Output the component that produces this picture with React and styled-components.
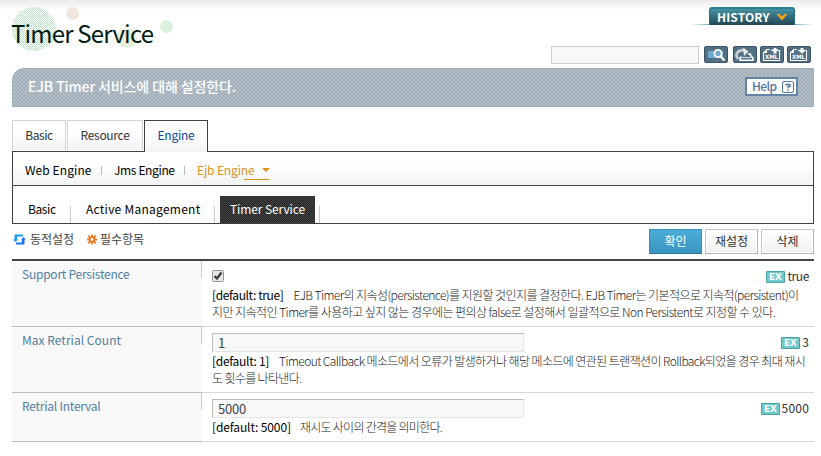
import React from "react";
import styled, { createGlobalStyle, css } from "styled-components";

const GlobalStyle = createGlobalStyle`
  * { box-sizing: border-box; }
  body {
    margin: 0;
    background: #fff;
    color: #444;
    font: 12px/17px "Noto Sans CJK KR", "Noto Sans", sans-serif;
  }
  button, input { font: inherit; color: inherit; margin: 0; }
  svg { flex: none; }
`;

const Text = styled.span`
  letter-spacing: ${(p) => p.$ls || 0}px;
  white-space: nowrap;
`;

const Page = styled.div`
  width: 821px;
  height: 456px;
  overflow: hidden;
  padding: 0 7px 0 12px;
  background: linear-gradient(#ebebeb, #fff 10px) no-repeat;
`;

const Header = styled.header`
  display: flex;
  justify-content: space-between;
  height: 68px;
`;

const TitleArea = styled.div`
  position: relative;
  width: 180px;
`;

const Bubbles = styled.svg`
  position: absolute;
  left: 0;
  top: 0;
`;

const Title = styled.h1`
  position: relative;
  margin: 17px 0 0 -1px;
  font-size: 24px;
  line-height: 32px;
  font-weight: 400;
  color: #001a12;
  letter-spacing: -0.82px;
  white-space: nowrap;
`;

const HeaderTools = styled.div`
  display: flex;
  flex-direction: column;
  align-items: flex-end;
  width: 265px;
`;

const HistoryRail = styled.div`
  display: flex;
  justify-content: center;
  width: 124px;
  height: 25px;
  padding-top: 7px;
  background: linear-gradient(90deg, #fff, #5ba3b0 18%, #5ba3b0 82%, #fff) 0 24px / 100% 1px no-repeat;
`;

const HistoryButton = styled.button`
  display: flex;
  align-items: center;
  gap: 6px;
  width: 86px;
  height: 18px;
  padding: 0 6px 1px 7px;
  border: 1px solid #2b7080;
  border-top: 2px solid #2b8090;
  border-bottom: 0;
  border-radius: 3px 3px 0 0;
  background: linear-gradient(#4592a3, #234753);
  color: #fff;
  font-weight: 700;
  line-height: 14px;
`;

const Toolbar = styled.div`
  display: flex;
  margin: 21px 3px 0 0;
`;

const SearchInput = styled.input`
  width: 148px;
  height: 18px;
  margin-right: 5px;
  border: 1px solid #ccc;
  background: #f8f8f8;
`;

const IconButton = styled.button`
  display: block;
  width: 24px;
  height: 17px;
  margin-left: ${(p) => p.$gap || 0}px;
  padding: 0;
  border: 1px solid #3c5266;
  border-radius: 2px;
  background: #526f84;
  svg { display: block; }
`;

const IconLabel = styled.text`
  font: 700 ${(p) => p.$size}px "DejaVu Sans", sans-serif;
  fill: #fff;
`;

const Banner = styled.div`
  display: flex;
  align-items: center;
  justify-content: space-between;
  height: 39px;
  padding: 0 15px 2px;
  border: 1px solid #9cadba;
  border-radius: 12px 0 0 0;
  background: repeating-conic-gradient(#b2bdc6 0 25%, #a1afbb 0 50%) 0 0 / 4px 4px;
  color: #fff;
  font-size: 14px;
  font-weight: 500;
`;

const HelpButton = styled.button`
  display: flex;
  align-items: center;
  justify-content: space-between;
  width: 53px;
  height: 19px;
  padding: 0 2px 0 5px;
  border: 2px solid #6384a3;
  background: #fff;
  color: #56799a;
  font-size: 12px;
  line-height: 15px;
  ${Text} { margin-top: -2px; }
`;

const Tabs = styled.nav`
  display: flex;
  gap: 1px;
  height: 31px;
  margin-top: 13px;
`;

const Tab = styled.a`
  display: flex;
  justify-content: center;
  width: ${(p) => p.$w}px;
  height: 30px;
  padding-top: 5px;
  border: 1px solid #d3d3d3;
  border-bottom: 0;
  background: linear-gradient(#fff 40%, #f2f3f5);
  color: #333;
  ${(p) => p.$active && css`
    z-index: 1;
    height: 32px;
    border-color: #414141;
    color: #0a4a9a;
  `}
`;

const Panel = styled.div`
  border: 1px solid #414141;
  height: 73px;
`;

const EngineRow = styled.div`
  display: flex;
  height: 34px;
  padding: 9px 0 0 12px;
  border-bottom: 1px solid #414141;
  background: linear-gradient(#fff 35%, #f2f3f5);
`;

const EngineLink = styled.a`
  position: relative;
  width: ${(p) => p.$w}px;
  color: ${(p) => (p.$active ? "#dd921a" : "#000")};
  &:not(:last-child)::after {
    content: "";
    position: absolute;
    right: ${(p) => p.$sep}px;
    top: 5px;
    height: 9px;
    border-left: 1px solid #bbb;
  }
`;

const EngineMarker = styled.svg`
  position: absolute;
  left: 47px;
  top: 6px;
`;

const ServiceRow = styled.div`
  display: flex;
  align-items: flex-end;
  height: 37px;
`;

const ServiceTab = styled.a`
  height: 27px;
  width: ${(p) => p.$w}px;
  padding: 4px 0 0 ${(p) => p.$pad}px;
  color: #000;
  ${(p) => p.$active && css`
    background: repeating-conic-gradient(#242424 0 25%, #464646 0 50%) 0 0 / 2px 2px;
    color: #fff;
  `}
`;

const Divider = styled.i`
  width: 1px;
  height: 17px;
  margin-right: ${(p) => p.$after || 0}px;
  margin-left: ${(p) => p.$before || 0}px;
  background: #ccc;
`;

const ActionBar = styled.div`
  display: flex;
  justify-content: space-between;
  height: 35px;
  padding-top: 5px;
`;

const Legend = styled.div`
  display: flex;
  height: 20px;
  padding-top: 1px;
`;

const LegendItem = styled.span`
  display: flex;
  gap: ${(p) => p.$gap}px;
  margin: 0 12px 0 1px;
  svg { margin-top: 4px; }
`;

const Actions = styled.div`
  display: flex;
  gap: 3px;
`;

const ActionButton = styled.button`
  width: 53px;
  height: 25px;
  padding: 0 0 2px;
  border: 1px solid #c4c4c4;
  border-right-color: #b4b4b4;
  border-bottom-color: #b4b4b4;
  box-shadow: inset 0 0 0 1px #fff;
  background: linear-gradient(#fff, #f0f0f0);
  color: #333;
  ${(p) => p.$primary && css`
    border-color: #3c90b8;
    border-bottom-color: #2b7399;
    box-shadow: none;
    background: linear-gradient(#4badd9, #3b94c0);
    color: #fff;
  `}
`;

const Settings = styled.div`
  border-top: 2px solid #444;
`;

const Setting = styled.div`
  display: grid;
  grid-template-columns: 190px 1fr;
  height: ${(p) => p.$h}px;
`;

const SettingLabel = styled.div`
  padding: 4px 0 0 10px;
  border-bottom: 1px solid #bbb;
  background: linear-gradient(#ccc, #ccc) 189px 0 / 1px 17px no-repeat #f9f9f9;
  color: #50809f;
`;

const SettingBody = styled.div`
  padding: 6px 5px 0 10px;
  border-bottom: 1px solid #d9d9d9;
`;

const ControlRow = styled.div`
  display: flex;
  justify-content: space-between;
  height: 20px;
`;

const ValueInput = styled.input`
  width: 312px;
  height: 19px;
  padding: 0 5px;
  border: 1px solid #e5e5e5;
  border-top-color: #bbb;
  border-left-color: #bbb;
  background: #f8f8f8;
  font-size: 13px;
  letter-spacing: -0.2px;
`;

const Checkbox = styled.svg`
  margin-top: 3px;
`;

const Example = styled.div`
  display: flex;
  gap: 2px;
  color: #333;
  svg { margin-top: 4px; }
`;

const Description = styled.div`
  height: ${(p) => (p.$lines || 1) * 17}px;
  line-height: 16.5px;
  font-weight: 300;
  color: #1c1c1c;
`;

const Default = styled(Text)`
  display: inline-block;
  margin-right: ${(p) => p.$gap}px;
  color: #000;
  font-weight: 400;
`;

const ExBadge = () => (
  <svg width="19" height="12" viewBox="0 0 19 12">
    <rect width="19" height="12" rx="1" fill="#4aa3a5" />
    <rect x="1" y="1" width="17" height="10" fill="#71c9ca" />
    <IconLabel $size={8} x="3" y="9" textLength="13" lengthAdjust="spacingAndGlyphs">EX</IconLabel>
  </svg>
);

const SearchIcon = () => (
  <svg width="22" height="15" viewBox="0 0 22 15">
    <path d="M3 4h15v7H3z" fill="#6fa9cf" />
    <circle cx="13" cy="6.500" r="3.600" fill="#6fa9cf" stroke="#fff" strokeWidth="1.800" />
    <path d="M15.800 9.500l3.700 4" stroke="#fff" strokeWidth="2.200" />
  </svg>
);

const UndoIcon = () => (
  <svg width="22" height="15" viewBox="0 0 22 15" fill="none">
    <path d="M4 12C0.500 7 4 2.500 10 3.500" stroke="#c3cad0" strokeWidth="3" />
    <path d="M9 0.500l5.500 4L10 9z" fill="#e8ebed" />
    <path d="M7.500 9.500L6 11v2.300h13V11l-2.500-2.500V7H14" stroke="#fff" strokeWidth="1.500" />
    <path d="M8 10.500h9" stroke="#fff" strokeWidth="0.800" />
  </svg>
);

const XmlIcon = ({ down }) => (
  <svg width="22" height="15" viewBox="0 0 22 15" fill="none">
    <path d="M9 2.500H6L2.500 6v7.500h16V2.500" stroke="#fff" shapeRendering="crispEdges" />
    <path d="M3 6h3V3z" fill="#fff" />
    <path d={down ? "M12.500 1h3v2H18.500L14 6.500 9.500 3h3z" : "M14 0.500L18.500 4h-3v2.500h-3V4h-3z"} fill="#fff" />
    <IconLabel $size={6} x="4" y="12" textLength="13" lengthAdjust="spacingAndGlyphs">XML</IconLabel>
  </svg>
);

const DynamicIcon = () => (
  <svg width="13" height="11" viewBox="0 0 13 11">
    <path d="M2 1h8v2H4v3H5L2.500 8.500 0 6h1.500V2z" fill="#1499f5" transform="translate(0 -0.500)" />
    <path d="M11 10H3V8h6V5H8l2.500-2.500L13 5h-1.500v4z" fill="#1a70f2" transform="translate(0 0.500)" />
  </svg>
);

const RequiredIcon = () => (
  <svg width="10" height="11" viewBox="0 0 10 11" stroke="#f07a20" fill="none">
    <path d="M5 0.500v3M5 7.500v3M0 5.500h3M7 5.500h3M1.200 1.700l2.300 2.300M8.800 1.700L6.500 4M1.200 9.300L3.500 7M8.800 9.300L6.500 7" strokeWidth="1.800" />
    <circle cx="5" cy="5.500" r="2.300" strokeWidth="1.800" />
  </svg>
);

const rows = [
  {
    label: "Support Persistence", ls: -0.24, h: 66, control: "check",
    example: "true", exLs: -0.4, def: "[default: true]", defLs: -0.38, gap: 10,
    lines: [
      ["EJB Timer의 지속성(persistence)를 지원할 것인지를 결정한다. EJB Timer는 기본적으로 지속적(persistent)이", -0.57],
      ["지만 지속적인 Timer를 사용하고 싶지 않는 경우에는 편의상 false로 설정해서 일괄적으로 Non Persistent로 지정할 수 있다.", -0.55],
    ],
  },
  {
    label: "Max Retrial Count", ls: 0.03, h: 66, control: "1",
    example: "3", exLs: 0, def: "[default: 1]", defLs: -0.3, gap: 10,
    lines: [
      ["Timeout Callback 메소드에서 오류가 발생하거나 해당 메소드에 연관된 트랜잭션이 Rollback되었을 경우 최대 재시", -0.59],
      ["도 횟수를 나타낸다.", -0.65],
    ],
  },
  {
    label: "Retrial Interval", ls: -0.24, h: 49, control: "5000",
    example: "5000", exLs: 0.2, def: "[default: 5000]", defLs: -0.12, gap: 9,
    lines: [["재시도 사이의 간격을 의미한다.", -0.72]],
  },
];

export default function App() {
  return (
    <Page>
      <GlobalStyle />
      <Header>
        <TitleArea>
          <Bubbles width="180" height="60">
            <defs>
              <pattern id="mesh" width="2" height="2" patternUnits="userSpaceOnUse">
                <path d="M0 0h1v1H0zM1 1h1v1H1z" fill="#bfe6c8" />
              </pattern>
            </defs>
            <circle cx="22" cy="29" r="22" fill="url(#mesh)" />
            <circle cx="60.500" cy="13.500" r="6.500" fill="#f0e6db" />
            <circle cx="154.500" cy="26.500" r="6.500" fill="#dbf0dc" />
            <circle cx="115" cy="38" r="10" fill="#e7efdb" />
          </Bubbles>
          <Title>Timer Service</Title>
        </TitleArea>
        <HeaderTools>
          <HistoryRail>
            <HistoryButton>
              <Text $ls={0.13}>HISTORY</Text>
              <svg width="12" height="8" viewBox="0 0 12 8">
                <path d="M0.500 1h3L6 3.500 8.500 1h3L6 7.500z" fill="#f9a51b" />
              </svg>
            </HistoryButton>
          </HistoryRail>
          <Toolbar>
            <SearchInput />
            <IconButton><SearchIcon /></IconButton>
            <IconButton $gap={5}><UndoIcon /></IconButton>
            <IconButton $gap={3}><XmlIcon /></IconButton>
            <IconButton $gap={3}><XmlIcon down /></IconButton>
          </Toolbar>
        </HeaderTools>
      </Header>

      <Banner>
        <Text $ls={-0.11}>EJB Timer 서비스에 대해 설정한다.</Text>
        <HelpButton>
          <Text $ls={-0.6}>Help</Text>
          <svg width="12" height="12" viewBox="0 0 12 12" fill="none" stroke="#56799a">
            <rect x="0.500" y="0.500" width="11" height="11" rx="1.500" />
            <path d="M4 4.500V3.500h4v2H6v2M6 8.500v1.500" strokeWidth="1.300" />
          </svg>
        </HelpButton>
      </Banner>

      <Tabs>
        <Tab $w={54}><Text $ls={-0.4}>Basic</Text></Tab>
        <Tab $w={76}><Text $ls={-0.29}>Resource</Text></Tab>
        <Tab $w={64} $active><Text $ls={-0.24}>Engine</Text></Tab>
      </Tabs>
      <Panel>
        <EngineRow>
          <EngineLink $w={89} $sep={12}><Text $ls={0.08}>Web Engine</Text></EngineLink>
          <EngineLink $w={83} $sep={12}><Text $ls={-0.36}>Jms Engine</Text></EngineLink>
          <EngineLink $w={80} $active>
            <Text $ls={-0.14}>Ejb Engine</Text>
            <EngineMarker width="26" height="14">
              <path d="M18 1h8l-4 4z" fill="#dd921a" />
              <path d="M0 12.500h25" stroke="#dd921a" />
            </EngineMarker>
          </EngineLink>
        </EngineRow>
        <ServiceRow>
          <ServiceTab $w={57} $pad={15}><Text $ls={-0.4}>Basic</Text></ServiceTab>
          <Divider />
          <ServiceTab $w={143} $pad={15}><Text $ls={0.26}>Active Management</Text></ServiceTab>
          <Divider $after={5} />
          <ServiceTab $w={95} $pad={10} $active><Text $ls={-0.11}>Timer Service</Text></ServiceTab>
          <Divider $before={4} />
        </ServiceRow>
      </Panel>

      <ActionBar>
        <Legend>
          <LegendItem $gap={4}>
            <DynamicIcon />
            <Text $ls={-0.04}>동적설정</Text>
          </LegendItem>
          <LegendItem $gap={3}>
            <RequiredIcon />
            <Text $ls={-0.04}>필수항목</Text>
          </LegendItem>
        </Legend>
        <Actions>
          <ActionButton $primary>확인</ActionButton>
          <ActionButton>재설정</ActionButton>
          <ActionButton>삭제</ActionButton>
        </Actions>
      </ActionBar>

      <Settings>
        {rows.map((r) => (
          <Setting key={r.label} $h={r.h}>
            <SettingLabel><Text $ls={r.ls}>{r.label}</Text></SettingLabel>
            <SettingBody>
              <ControlRow>
                {r.control === "check" ? (
                  <Checkbox width="12" height="12" viewBox="0 0 12 12">
                    <rect x="0.500" y="0.500" width="11" height="11" rx="1" fill="#e6e6e6" stroke="#999" />
                    <path d="M2.500 6l2.500 2.500 4.500-6" fill="none" stroke="#3c3c3c" strokeWidth="2.200" />
                  </Checkbox>
                ) : (
                  <ValueInput defaultValue={r.control} />
                )}
                <Example>
                  <ExBadge />
                  <Text $ls={r.exLs}>{r.example}</Text>
                </Example>
              </ControlRow>
              <Description $lines={r.lines.length}>
                <Default $ls={r.defLs} $gap={r.gap}>{r.def}</Default>
                {r.lines.map(([line, ls], i) => (
                  <React.Fragment key={line}>
                    {i > 0 && <br />}
                    <Text $ls={ls}>{line}</Text>
                  </React.Fragment>
                ))}
              </Description>
            </SettingBody>
          </Setting>
        ))}
      </Settings>
    </Page>
  );
}
